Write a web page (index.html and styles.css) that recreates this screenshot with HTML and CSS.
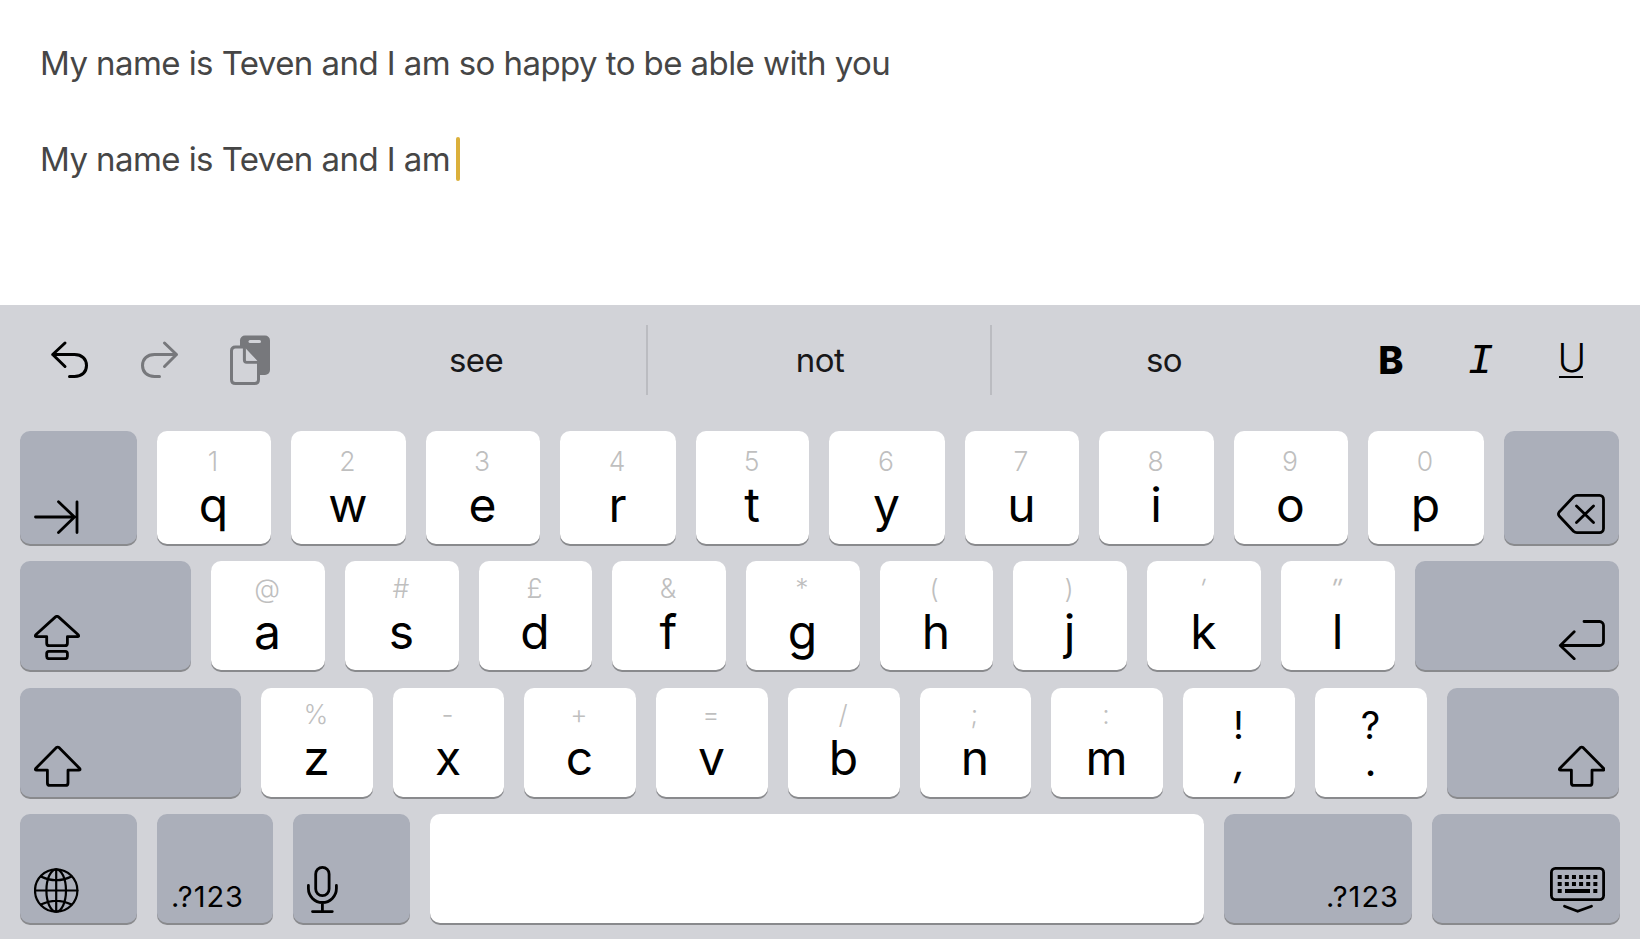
FILE: index.html
```html
<!DOCTYPE html>
<html lang="en">
<head>
<meta charset="utf-8">
<title>Notes</title>
<link rel="stylesheet" href="styles.css">
</head>
<body>
<svg class="defs" aria-hidden="true">
  <symbol id="shift" viewBox="34 745.500 48 42">
    <path d="M56.2 748.2q1.5-1.2 3 0L79.7 769q1 1.7-1 1.7H68V783.400q0 2.500-2.500 2.500H49.900q-2.500 0-2.500-2.500V770.700H36.700q-2 0-1-1.700Z"/>
  </symbol>
</svg>
<main class="note">
  <p class="line first">My name is Teven and I am so happy to be able with you</p>
  <p class="line">My name is Teven and I am<span class="caret"></span></p>
</main>
<section class="keyboard">
  <div class="toolbar">
    <div class="tools">
      <svg class="icon i3" width="40" height="70" viewBox="50 325 40 70"><path d="M65 343 52.700 354.500 65 366.500M52.700 354.500H74.500C82 354.500 86.500 359 86.500 365.500S82 376.500 74.500 376.500H69.500"/></svg>
      <svg class="icon i3 dim" width="40" height="70" viewBox="140 325 40 70"><path d="M164.500 343 176.500 354.500 164.500 366.500M176.500 354.500H154.500C147 354.500 142.500 359 142.500 365.500S147 376.500 154.500 376.500H159.500"/></svg>
      <svg class="paste" width="42" height="70" viewBox="229 325 42 70">
        <rect class="board" x="240" y="335.500" width="30" height="39.500" rx="5"/>
        <rect class="paper" x="248.500" y="340" width="12.500" height="3" rx="1.500"/>
        <path class="sheet" d="M244.500 347H235.500q-4 0-4 4V379.500q0 4 4 4H254.500q4 0 4-4V362L244.500 347Z"/>
        <path class="board" d="M244 346 260 362.500V350Z"/>
        <path class="sheet" d="M244.400 347V360q0 2.200 2.200 2.200H258.500"/>
        <path class="paper" d="M246.200 350 257.200 360.800H246.200Z"/>
      </svg>
    </div>
    <div class="suggestion">see</div>
    <div class="suggestion">not</div>
    <div class="suggestion last">so</div>
    <div class="format">
      <span class="bold">B</span>
      <span class="italic">I</span>
      <span class="underline">U</span>
    </div>
  </div>

  <div class="row r1">
    <div class="key fn"><svg class="icon" width="46" height="34" viewBox="34 500.500 46 34"><path d="M35.500 517.500H74.500M58.500 502.300 74.500 517.500 58.500 533M77 502.300V533"/></svg></div>
    <div class="key"><i>1</i><b>q</b></div>
    <div class="key"><i>2</i><b>w</b></div>
    <div class="key"><i>3</i><b>e</b></div>
    <div class="key"><i>4</i><b>r</b></div>
    <div class="key"><i>5</i><b>t</b></div>
    <div class="key"><i>6</i><b>y</b></div>
    <div class="key"><i>7</i><b>u</b></div>
    <div class="key"><i>8</i><b>i</b></div>
    <div class="key"><i>9</i><b>o</b></div>
    <div class="key"><i>0</i><b>p</b></div>
    <div class="key fn end"><svg class="icon" width="48" height="40" viewBox="1557 494 48 40"><path d="M1577 495.400H1599.500a4 4 0 0 1 4 4V528.600a4 4 0 0 1-4 4H1577Q1575 532.600 1573.500 531.200L1559.200 516q-1.500-2 0-4L1573.500 496.800Q1575 495.400 1577 495.400ZM1576.500 506 1593.500 522.500M1593.500 506 1576.500 522.500"/></svg></div>
  </div>

  <div class="row r2">
    <div class="key fn"><svg class="icon" width="46" height="45" viewBox="34 615 46 45"><path d="M55.500 616.900q1.500-1.100 3 0L78.200 634.700q1.200 2-.8 2H67.400V643.200q0 2.500-2.500 2.500H49.200q-2.500 0-2.500-2.500V636.700H36.600q-2 0-.8-2Z"/><rect x="46.700" y="651.300" width="20.700" height="7.400" rx="2.200"/></svg></div>
    <div class="key"><i>@</i><b>a</b></div>
    <div class="key"><i>#</i><b>s</b></div>
    <div class="key"><i>£</i><b>d</b></div>
    <div class="key"><i>&amp;</i><b>f</b></div>
    <div class="key"><i>*</i><b>g</b></div>
    <div class="key"><i class="open">(</i><b>h</b></div>
    <div class="key"><i>)</i><b>j</b></div>
    <div class="key"><i class="slant">'</i><b>k</b></div>
    <div class="key"><i class="slant wide">"</i><b>l</b></div>
    <div class="key fn end"><svg class="icon" width="47" height="40" viewBox="1558 620 47 40"><path d="M1584 621.500H1599.500a4 4 0 0 1 4 4V641.500a4 4 0 0 1-4 4H1560.500M1574.200 631.800 1560.300 645.500 1574.200 658.700"/></svg></div>
  </div>

  <div class="row r3">
    <div class="key fn"><svg class="icon" width="48" height="42"><use href="#shift"/></svg></div>
    <div class="key"><i>%</i><b>z</b></div>
    <div class="key"><i>-</i><b>x</b></div>
    <div class="key"><i>+</i><b>c</b></div>
    <div class="key"><i>=</i><b>v</b></div>
    <div class="key"><i>/</i><b>b</b></div>
    <div class="key"><i>;</i><b>n</b></div>
    <div class="key"><i>:</i><b>m</b></div>
    <div class="key punct"><b>!</b><b class="comma">,</b></div>
    <div class="key punct"><b>?</b><b class="stop">.</b></div>
    <div class="key fn end"><svg class="icon" width="47" height="42"><use href="#shift" width="48" height="42"/></svg></div>
  </div>

  <div class="row r4">
    <div class="key fn"><svg class="icon thin" width="45" height="45" viewBox="34 868.500 45 45"><circle cx="56.200" cy="891" r="21.200"/><ellipse cx="56.200" cy="891" rx="9.800" ry="21.200"/><path d="M56.200 870V912M35 891H77.400M40.800 877Q56.200 884.500 71.600 877M40.800 905Q56.200 897.500 71.600 905"/></svg></div>
    <div class="key fn mode">.?123</div>
    <div class="key fn"><svg class="icon" width="32" height="47" viewBox="307 866 32 47"><rect x="315.700" y="867.400" width="13.400" height="28.200" rx="6.700"/><path d="M308.400 885.500V888.500a14 14 0 0 0 28 0V885.500M322.400 902.500V911.600M312.500 911.600H332.300"/></svg></div>
    <div class="key"></div>
    <div class="key fn end mode">.?123</div>
    <div class="key fn end last"><svg class="icon" width="55" height="46" viewBox="1550 867 55 46"><rect x="1551.400" y="868.400" width="52.200" height="31.200" rx="4"/><path class="dots" d="M1557.700 877H1597.500M1557.700 884H1597.500"/><path class="dots" d="M1557.700 891H1561.700M1593.300 891H1597.500"/><path class="bar" d="M1565 891H1590"/><path d="M1564.500 906.200 1577.700 911.300 1591.500 906.200"/></svg></div>
  </div>
</section>
</body>
</html>
```
FILE: styles.css
```css
* { box-sizing: border-box; }

body {
  margin: 0;
  width: 1640px;
  height: 939px;
  overflow: hidden;
  display: flex;
  flex-direction: column;
  background: #fff;
  font-family: Inter, "Liberation Sans", sans-serif;
}

.defs { display: none; }

.note {
  height: 305px;
  padding: 39px 40px 0;
  color: #464646;
}

.line {
  display: flex;
  align-items: center;
  height: 48px;
  margin: 0;
  font-size: 33px;
  letter-spacing: -0.57px;
  line-height: 48px;
  white-space: pre;
}

.line.first { margin-bottom: 48px; }

.caret {
  width: 4px;
  height: 44px;
  margin-left: 5.5px;
  border-radius: 2px;
  background: #dbb03b;
}

.keyboard {
  flex: 1;
  background: #d2d3d8;
  color: #000;
}

.toolbar {
  display: grid;
  grid-template-columns: 304px 344px 344px 344px 304px;
  height: 126px;
  padding-top: 20px;
}

.toolbar > * { height: 70px; }

.tools {
  display: flex;
  padding-left: 50px;
  gap: 50px;
}

.icon {
  display: block;
  fill: none;
  stroke: #000;
  stroke-width: 2.8;
  stroke-linecap: round;
  stroke-linejoin: round;
}

.icon.i3 { stroke-width: 3; }
.icon.thin { stroke-width: 2.2; }
.icon.dim { stroke: #77787c; }
.icon .dots { stroke-width: 4; stroke-linecap: butt; stroke-dasharray: 4 3.130; }
.icon .bar { stroke-width: 4; stroke-linecap: butt; }

.paste { margin-left: -1px; }
.paste .board { fill: #77787c; }
.paste .paper { fill: #d2d3d8; }
.paste .sheet { fill: #d2d3d8; stroke: #77787c; stroke-width: 3; stroke-linejoin: round; }

.suggestion {
  padding-left: 2px;
  border-right: 2px solid #bbbcc1;
  color: #18181a;
  font-size: 33px;
  letter-spacing: -0.6px;
  line-height: 70px;
  text-align: center;
}

.suggestion.last { border-color: transparent; }

.format {
  display: grid;
  grid-template-columns: 110px 69px 112px;
  line-height: 70px;
  text-align: center;
}

.bold { font-size: 38px; font-weight: 800; }
.italic { font: italic 43px/74px "Liberation Mono", monospace; }

.underline {
  justify-self: center;
  align-self: start;
  height: 53px;
  border-bottom: 2.5px solid #000;
  font-size: 39px;
  font-weight: 360;
  line-height: 66px;
  letter-spacing: -3.5px;
  text-indent: -2px;
}

.row {
  display: grid;
  column-gap: 20px;
  padding-left: 20px;
}

.r1 { grid-template-columns: 117px 114px 115px 114px 116px 113px 116px 114px 115px 114px 116px 115px; height: 113px; margin-bottom: 17px; }
.r2 { grid-template-columns: 171px 114px 114px 113px 114px 114px 113px 114px 114px 114px 204px; height: 109px; margin-bottom: 18px; }
.r3 { grid-template-columns: 221px 112px 111px 112px 112px 112px 111px 112px 112px 112px 172px; height: 109px; margin-bottom: 17px; }
.r4 { grid-template-columns: 117px 116px 117px 774px 188px 188px; height: 109px; }

.key {
  display: flex;
  flex-direction: column;
  align-items: center;
  padding-right: 1px;
  border-radius: 10px;
  background: #fff;
  box-shadow: 0 2px 0 #898a8d;
}

.r1 .key { padding-top: 15px; }
.r2 .key { padding-top: 12px; }
.r3 .key { padding-top: 11px; }

.key i {
  margin-left: -1px;
  color: #bfbfbf;
  font-size: 26.5px;
  font-style: normal;
  font-weight: 350;
  line-height: 30px;
}

.key i.slant { transform: translateX(-1px) skewX(-18deg); }
.key i.wide { letter-spacing: 1px; transform: translateX(-1px) scaleX(1.25) skewX(-15deg); }
.key i.open { margin-left: -4px; }

.key b {
  margin-top: 4px;
  font-size: 48px;
  font-weight: 370;
  line-height: 50px;
}

.r3 .key.punct { padding-top: 19px; }
.key.punct b { height: 36px; margin: 0; font-size: 38px; line-height: 36px; }
.key.punct .comma { font-size: 42px; transform: translateX(2px) skewX(-8deg); }
.key.punct .stop { font-size: 42px; }

.row .key.fn {
  align-items: flex-start;
  justify-content: flex-end;
  padding: 0 14px 10px;
  background: #abafba;
}

.row .key.fn.end { align-items: flex-end; }
.row .key.fn.last { padding-right: 15px; }

.row .key.mode {
  padding-bottom: 8px;
  font-size: 29px;
  letter-spacing: 1px;
  line-height: 36px;
}

.row .key.mode.end { padding-right: 13px; }
```
